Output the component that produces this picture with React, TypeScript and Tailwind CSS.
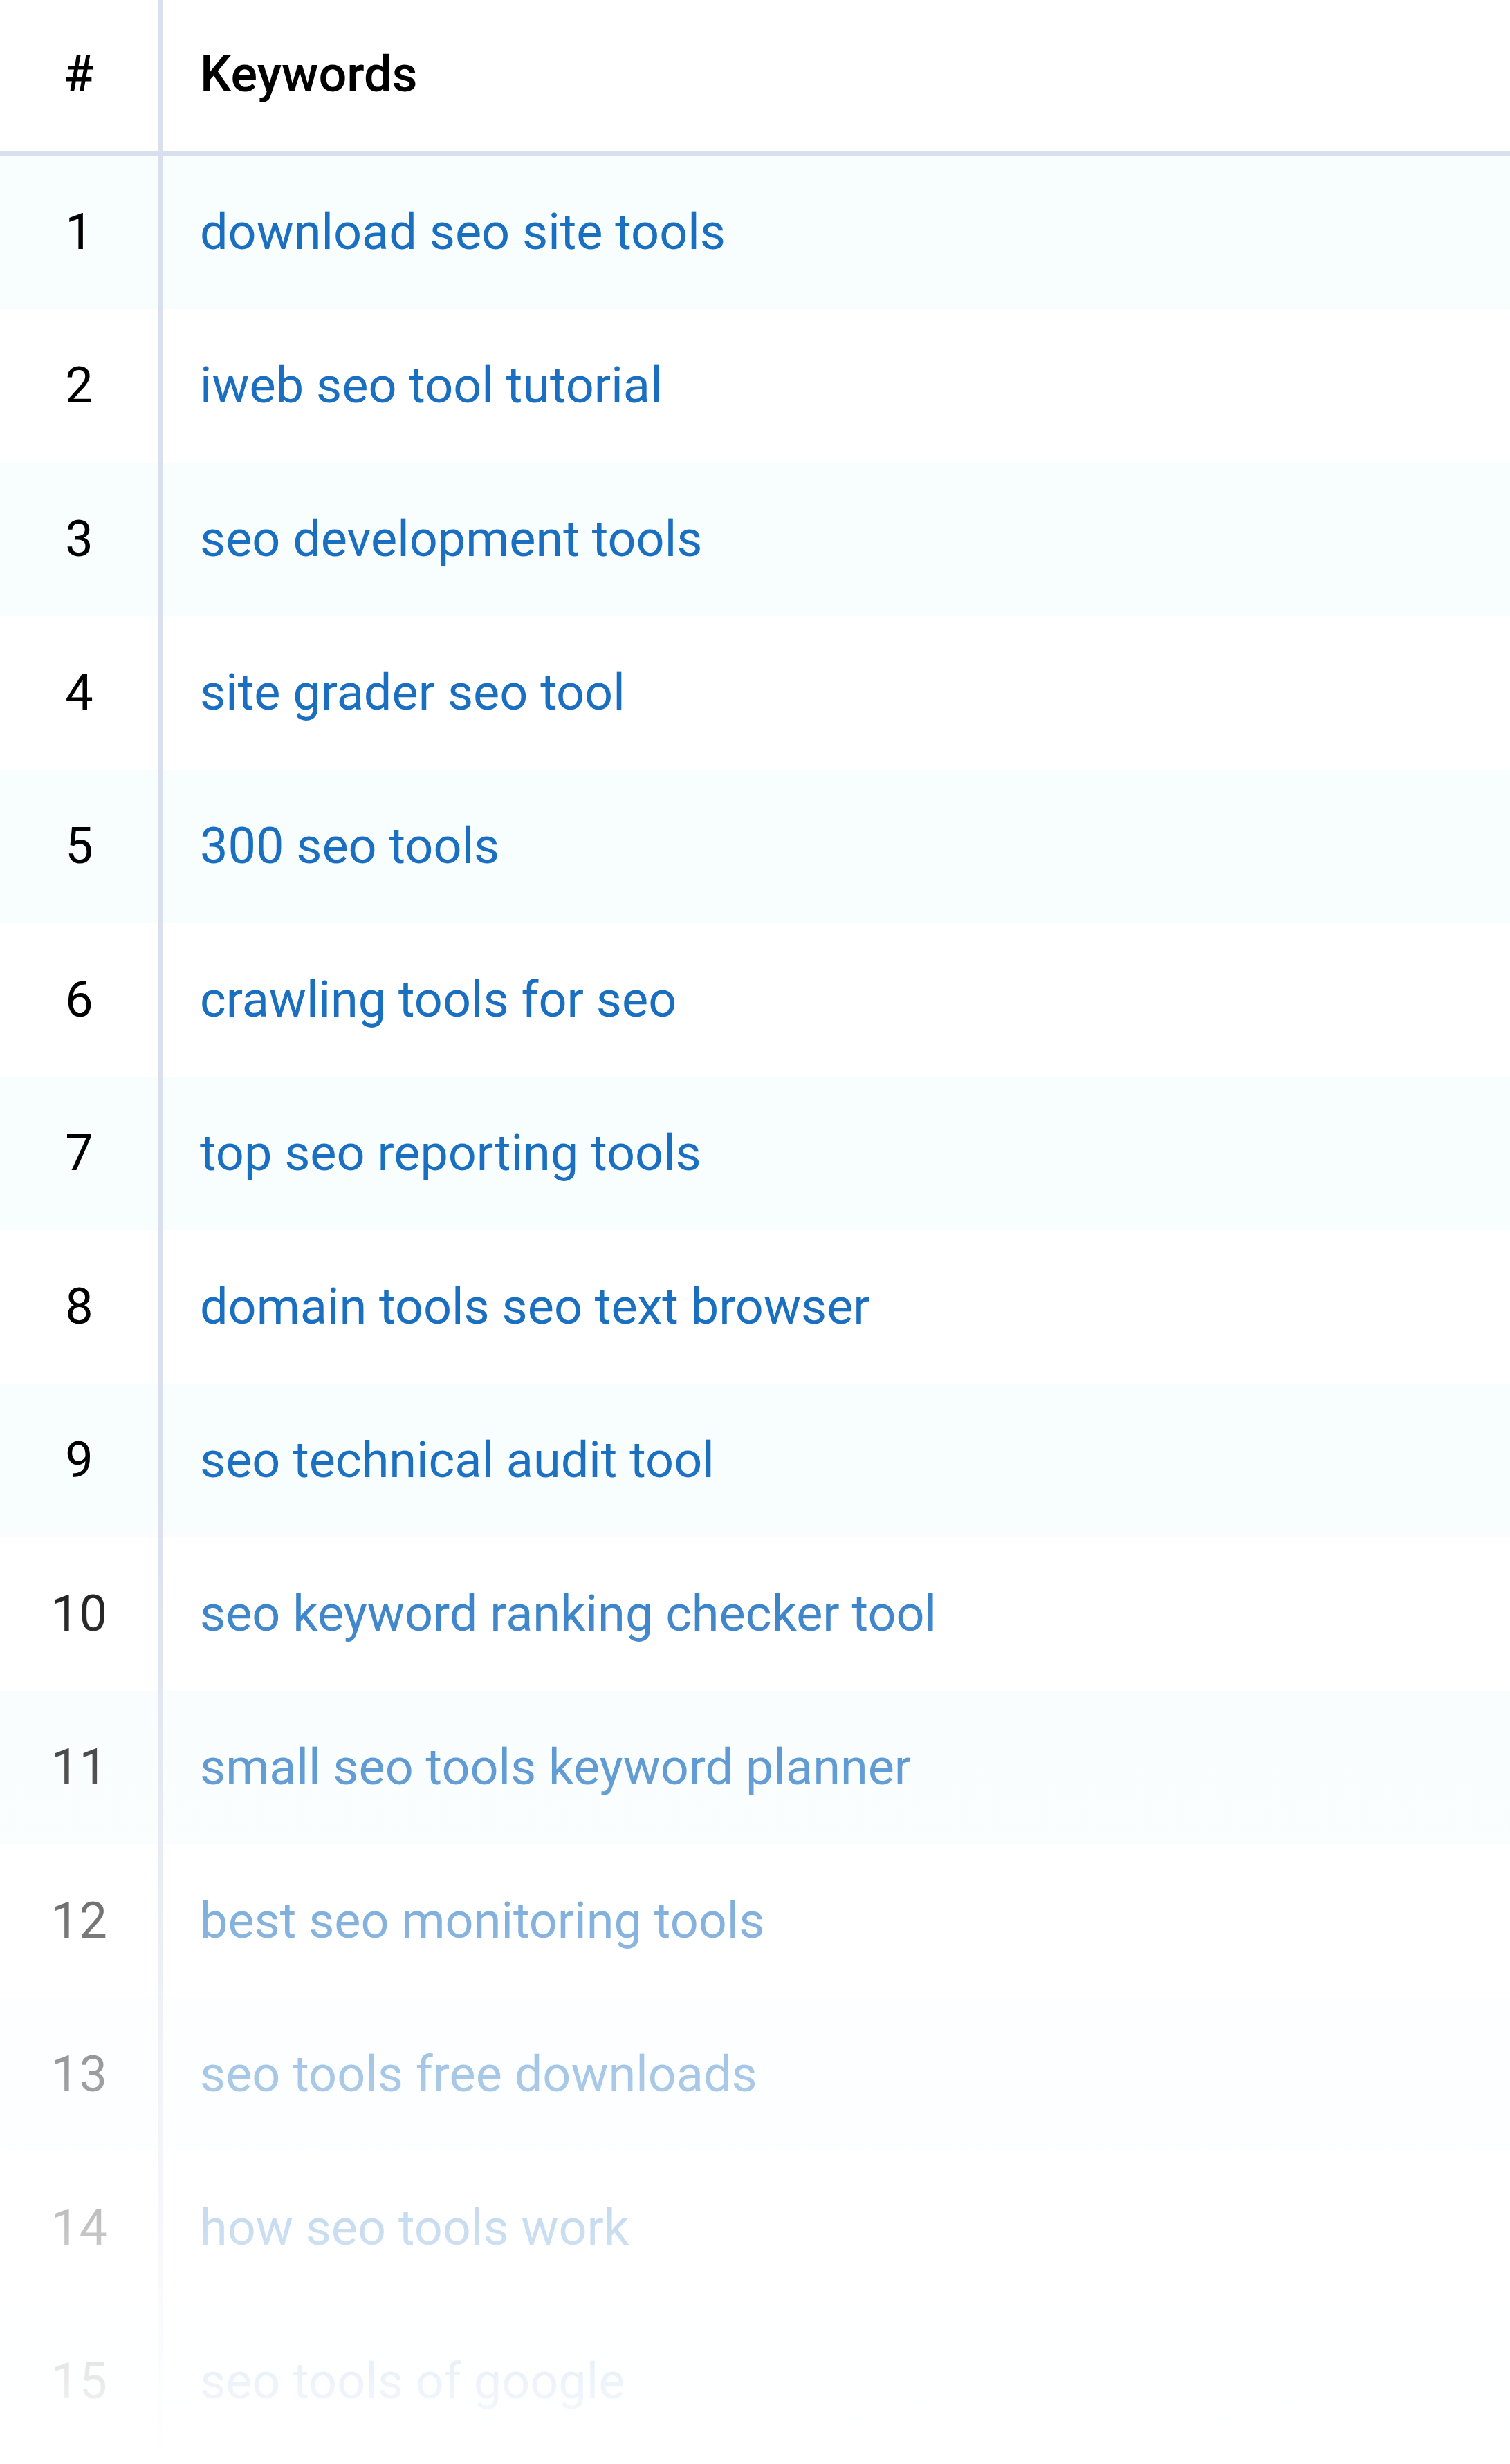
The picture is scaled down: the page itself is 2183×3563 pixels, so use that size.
import React from "react";

const keywords = [
  "download seo site tools",
  "iweb seo tool tutorial",
  "seo development tools",
  "site grader seo tool",
  "300 seo tools",
  "crawling tools for seo",
  "top seo reporting tools",
  "domain tools seo text browser",
  "seo technical audit tool",
  "seo keyword ranking checker tool",
  "small seo tools keyword planner",
  "best seo monitoring tools",
  "seo tools free downloads",
  "how seo tools work",
  "seo tools of google",
];

export default function App() {
  return (
    <div className="relative min-h-[3563px] w-full bg-white font-['Roboto',_'Liberation_Sans',_sans-serif] text-[72px]">
      {/* header */}
      <div className="flex h-[225px] border-b-[6px] border-[#d9dfec]">
        <div className="flex w-[235px] shrink-0 items-center justify-center border-r-[6px] border-[#d9dfec] pb-1 font-medium text-black">
          #
        </div>
        <div className="flex items-center pb-1 pl-[54px] font-medium text-black">Keywords</div>
      </div>

      {/* rows */}
      {keywords.map((kw, i) => (
        <div
          key={kw}
          className={`flex h-[222px] ${i % 2 === 0 ? "bg-[#f8fdfe]" : "bg-white"}`}
        >
          <div className="flex w-[235px] shrink-0 items-center justify-center border-r-[6px] border-[#d9dfec] text-black">
            {i + 1}
          </div>
          <div className="flex items-center pl-[54px] text-[#1b6fc0]">{kw}</div>
        </div>
      ))}

      {/* fade out at the bottom */}
      <div className="pointer-events-none absolute inset-0 bg-[linear-gradient(to_bottom,rgba(255,255,255,0)_59%,#ffffff_100%)]" />
    </div>
  );
}
